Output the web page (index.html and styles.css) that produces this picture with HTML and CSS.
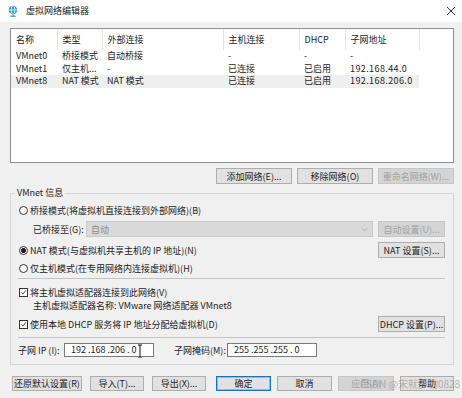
FILE: index.html
```html
<!DOCTYPE html>
<html lang="zh-CN">
<head>
  <meta charset="UTF-8">
  <meta name="viewport" content="width=device-width, initial-scale=1.0">
  <title>虚拟网络编辑器</title>
  <link rel="stylesheet" href="styles.css">
</head>
<body>
  <header class="titlebar">
    <svg class="app-icon" viewBox="0 0 12 12">
      <circle cx="6" cy="5" r="4.3" fill="#3b9ae0"/>
      <ellipse cx="6" cy="5" rx="1.8" ry="4.3" fill="none" stroke="#e6f4ff" stroke-width="0.8"/>
      <line x1="1.7" y1="5" x2="10.3" y2="5" stroke="#e6f4ff" stroke-width="0.8"/>
      <path d="M6 9.3v1.4M3.3 11.2h5.4" stroke="#2a78b8" stroke-width="1" fill="none"/>
    </svg>
    <span class="title">虚拟网络编辑器</span>
    <svg class="close" viewBox="0 0 10 10">
      <path d="M1 1l8 8M9 1l-8 8" stroke="#333" stroke-width="1" fill="none"/>
    </svg>
  </header>

  <main class="dialog">
    <!-- Network list -->
    <div class="list">
      <table class="net-table">
        <colgroup>
          <col style="width:46px"><col style="width:45px"><col style="width:121px">
          <col style="width:76px"><col style="width:46px"><col style="width:74px">
        </colgroup>
        <thead>
          <tr><th>名称</th><th>类型</th><th>外部连接</th><th>主机连接</th><th>DHCP</th><th>子网地址</th></tr>
        </thead>
        <tbody>
          <tr><td>VMnet0</td><td>桥接模式</td><td>自动桥接</td><td>-</td><td>-</td><td>-</td></tr>
          <tr><td>VMnet1</td><td>仅主机...</td><td>-</td><td>已连接</td><td>已启用</td><td class="ip">192.168.44.0</td></tr>
          <tr class="selected"><td>VMnet8</td><td>NAT 模式</td><td>NAT 模式</td><td>已连接</td><td>已启用</td><td class="ip">192.168.206.0</td></tr>
        </tbody>
      </table>
    </div>

    <div class="list-actions">
      <button class="btn btn-wide">添加网络(E)...</button>
      <button class="btn btn-wide">移除网络(O)</button>
      <button class="btn btn-wide" disabled>重命名网络(W)...</button>
    </div>

    <!-- VMnet info -->
    <fieldset class="group">
      <legend>VMnet 信息</legend>

      <div class="opt-row first">
        <span class="radio"></span>
        <span class="opt-label">桥接模式(将虚拟机直接连接到外部网络)(B)</span>
      </div>

      <div class="opt-row tall bridge-row">
        <span class="sub-label">已桥接至(G):</span>
        <div class="combo">
          <span>自动</span>
          <svg class="combo-arrow" viewBox="0 0 8 5"><path d="M1 1l3 3 3-3" stroke="#a8a8a8" fill="none"/></svg>
        </div>
        <button class="btn btn-side" disabled>自动设置(U)...</button>
      </div>

      <div class="opt-row tall nat-row">
        <span class="radio checked"></span>
        <span class="opt-label">NAT 模式(与虚拟机共享主机的 IP 地址)(N)</span>
        <button class="btn btn-side push">NAT 设置(S)...</button>
      </div>

      <div class="opt-row host-row">
        <span class="radio"></span>
        <span class="opt-label">仅主机模式(在专用网络内连接虚拟机)(H)</span>
      </div>

      <div class="sep sep-top"></div>

      <div class="opt-row adapter-row">
        <span class="checkbox">
          <svg viewBox="0 0 9 9"><path d="M1.6 4.4l2 2.1 3.9-4.6" stroke="#222" stroke-width="1.1" fill="none"/></svg>
        </span>
        <span class="opt-label">将主机虚拟适配器连接到此网络(V)</span>
      </div>
      <div class="adapter-name">主机虚拟适配器名称: VMware 网络适配器 VMnet8</div>

      <div class="opt-row tall dhcp-row">
        <span class="checkbox">
          <svg viewBox="0 0 9 9"><path d="M1.6 4.4l2 2.1 3.9-4.6" stroke="#222" stroke-width="1.1" fill="none"/></svg>
        </span>
        <span class="opt-label">使用本地 DHCP 服务将 IP 地址分配给虚拟机(D)</span>
        <button class="btn btn-side push">DHCP 设置(P)...</button>
      </div>

      <div class="sep sep-bottom"></div>

      <div class="ip-row">
        <span class="ip-label">子网 IP (I):</span>
        <div class="ip-input">192 .168 .206 . 0
          <svg class="ibeam" viewBox="0 0 6 14"><path d="M1 1h4M3 1v12M1 13h4" stroke="#fff" stroke-width="2.4" fill="none"/><path d="M1 1h4M3 1v12M1 13h4" stroke="#111" stroke-width="1" fill="none"/></svg>
        </div>
        <span class="ip-label mask-label">子网掩码(M):</span>
        <div class="ip-input">255 .255 .255 . 0</div>
      </div>
    </fieldset>

    <footer class="footer">
      <div class="footer-left">
        <button class="btn btn-restore">还原默认设置(R)</button>
        <button class="btn btn-io">导入(T)...</button>
        <button class="btn btn-io">导出(X)...</button>
      </div>
      <div class="footer-right">
        <button class="btn btn-main default">确定</button>
        <button class="btn btn-main">取消</button>
        <button class="btn btn-apply" disabled>应用(A)</button>
        <button class="btn btn-io">帮助</button>
      </div>
    </footer>
  </main>

  <div class="watermark">CSDN @宋就多动0828</div>
</body>
</html>
```

FILE: styles.css
```css
* {
  box-sizing: border-box;
}
body {
  margin: 0;
  width: 462px;
  height: 398px;
  overflow: hidden;
  position: relative;
  background-color: #f0f0f0;
  font-family: "Noto Sans CJK SC", "Microsoft YaHei", sans-serif;
  font-size: 9px;
  color: #1c1c1c;
}
.titlebar {
  height: 22px;
  background-color: #ffffff;
  display: flex;
  align-items: center;
  padding: 0 6px 0 7px;
}
.app-icon {
  width: 12px;
  height: 12px;
  margin-top: -1px;
}
.title {
  margin-left: 7px;
  line-height: 12px;
}
.close {
  margin-left: auto;
  width: 10px;
  height: 10px;
  margin-top: -1px;
}
.dialog {
  padding: 6px 8px 0 10px;
}
/* List */
.list {
  height: 135px;
  background-color: #ffffff;
  border: 1px solid #8e8e8e;
}
.net-table {
  border-collapse: collapse;
  table-layout: fixed;
  width: 408px;
}
.net-table th {
  height: 21px;
  padding: 0 0 0 5px;
  font-weight: normal;
  text-align: left;
  border-right: 1px solid #e5e5e5;
  white-space: nowrap;
}
.net-table td {
  height: 12.5px;
  line-height: 12px;
  padding: 0 0 0 5px;
  white-space: nowrap;
  overflow: hidden;
}
.net-table .ip {
  letter-spacing: 0.4px;
}
.net-table tr.selected td {
  background-color: #efefef;
}
/* Buttons */
.btn {
  font-family: inherit;
  font-size: 9px;
  color: #1c1c1c;
  background-color: #e1e1e1;
  border: 1px solid #adadad;
  border-radius: 0;
  padding: 0;
  height: 16px;
  line-height: 13px;
  white-space: nowrap;
}
.btn:disabled {
  background-color: #d4d4d4;
  border-color: #c6c6c6;
  color: #a2a2a2;
}
.btn.default {
  border-color: #0078d7;
  box-shadow: inset 0 0 0 1px rgba(0, 120, 215, 0.35);
}
.btn-wide {
  width: 76px;
}
.btn-side {
  width: 67px;
  height: 16px;
}
.push {
  margin-left: auto;
}
.list-actions {
  display: flex;
  justify-content: flex-end;
  gap: 5px;
  margin-top: 5px;
}
/* Group box */
.group {
  margin: 3px 0 0 0;
  padding: 0 8px 7px 7px;
  border: 1px solid #d6d6d6;
  min-width: 0;
}
.group legend {
  margin-left: -3px;
  padding: 0 2px;
  line-height: 12px;
}
.opt-row {
  display: flex;
  align-items: center;
  height: 14px;
}
.opt-row.tall {
  height: 16px;
}
.opt-row.first {
  margin-top: 4px;
}
.bridge-row {
  margin-top: 4px;
}
.nat-row {
  margin-top: 5px;
}
.host-row {
  margin-top: 3px;
}
.adapter-row {
  margin-top: 6px;
}
.dhcp-row {
  margin-top: 4px;
}
.radio, .checkbox {
  width: 9px;
  height: 9px;
  margin-left: 1px;
  border: 1px solid #333333;
  background-color: #ffffff;
  flex-shrink: 0;
}
.radio {
  border-radius: 50%;
}
.radio.checked {
  background: radial-gradient(circle, #222 0 2.2px, #fff 2.7px);
}
.checkbox svg {
  display: block;
  width: 7px;
  height: 7px;
}
.opt-label {
  margin-left: 2px;
  white-space: nowrap;
}
.sub-label {
  width: 68px;
  padding-left: 15px;
  white-space: nowrap;
}
.combo {
  width: 287px;
  height: 16px;
  margin-right: 5px;
  display: flex;
  align-items: center;
  padding: 0 4px 0 4px;
  background-color: #d9d9d9;
  border: 1px solid #cacaca;
  color: #8c8c8c;
}
.combo-arrow {
  margin-left: auto;
  width: 7px;
  height: 5px;
}
.sep {
  border-top: 1px solid #c4c4c4;
}
.sep-top {
  margin-top: 3px;
}
.sep-bottom {
  margin-top: 5px;
}
.adapter-name {
  margin-top: 1px;
  height: 12px;
  line-height: 12px;
  padding-left: 15px;
  white-space: nowrap;
}
.ip-row {
  display: flex;
  align-items: center;
  margin-top: 5px;
  height: 14px;
}
.ip-label {
  width: 46px;
  white-space: nowrap;
}
.mask-label {
  width: 53px;
  margin-left: 20px;
}
.ip-input {
  position: relative;
  width: 90px;
  height: 14px;
  line-height: 12px;
  padding-left: 6px;
  background-color: #ffffff;
  border: 1px solid #7a7a7a;
  white-space: pre;
}
.ibeam {
  position: absolute;
  left: 72px;
  top: 0;
  width: 6px;
  height: 14px;
}
/* Footer */
.footer {
  display: flex;
  margin-top: 11px;
}
.footer .btn {
  height: 15px;
}
.footer-left {
  display: flex;
  gap: 8px;
  margin-left: 2px;
}
.footer-right {
  display: flex;
  gap: 6px;
  margin-left: auto;
}
.btn-restore {
  width: 70px;
}
.btn-io {
  width: 54px;
}
.btn-main {
  width: 55px;
}
.btn-apply {
  width: 56px;
}
.watermark {
  position: absolute;
  left: 360px;
  top: 377px;
  font-size: 10px;
  line-height: 14px;
  color: rgba(130, 130, 130, 0.55);
  white-space: nowrap;
}
```
